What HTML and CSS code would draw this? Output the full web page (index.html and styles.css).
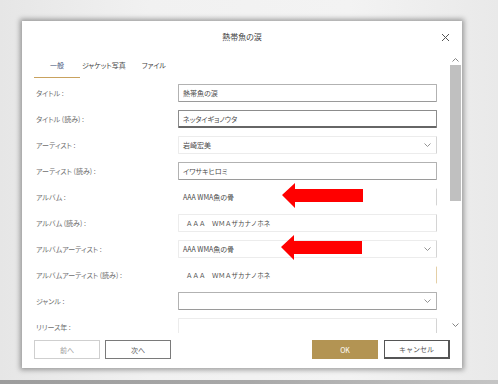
FILE: index.html
```html
<!DOCTYPE html>
<html lang="ja">
<head>
<meta charset="utf-8">
<title>熱帯魚の涙</title>
<link rel="stylesheet" href="styles.css">
</head>
<body>
<div class="backdrop">
  <div class="dialog">
    <header class="dlg-head">
      <span></span>
      <span class="dlg-title">熱帯魚の涙</span>
      <span class="close"><svg width="9" height="9" viewBox="0 0 9 9"><path d="M1 1L8 8M8 1L1 8" stroke="#555" stroke-width="1" fill="none"/></svg></span>
    </header>
    <div class="dlg-main">
      <div class="content">
        <nav class="tabs">
          <span class="tab active">一般</span>
          <span class="tab">ジャケット写真</span>
          <span class="tab tab-file">ファイル</span>
        </nav>
        <div class="form">
          <span class="label">タイトル :</span>
          <div class="field outlined">熱帯魚の涙</div>
          <span class="label">タイトル (読み) :</span>
          <div class="field focused">ネッタイギョノウタ</div>
          <span class="label">アーティスト :</span>
          <div class="field faint">岩崎宏美<svg class="chev" width="7" height="4" viewBox="0 0 7 4"><path d="M0.5 0.5L3.5 3.5L6.5 0.5" stroke="#888" stroke-width="0.9" fill="none"/></svg></div>
          <span class="label">アーティスト (読み) :</span>
          <div class="field outlined">イワサキヒロミ</div>
          <span class="label">アルバム :</span>
          <div class="field bare">AAA WMA魚の骨</div>
          <span class="label">アルバム (読み) :</span>
          <div class="field faint fw">ＡＡＡ　ＷＭＡザカナノホネ</div>
          <span class="label">アルバムアーティスト :</span>
          <div class="field faint">AAA WMA魚の骨<svg class="chev" width="7" height="4" viewBox="0 0 7 4"><path d="M0.5 0.5L3.5 3.5L6.5 0.5" stroke="#888" stroke-width="0.9" fill="none"/></svg></div>
          <span class="label">アルバムアーティスト (読み) :</span>
          <div class="field bare tan fw">ＡＡＡ　ＷＭＡザカナノホネ</div>
          <span class="label">ジャンル :</span>
          <div class="field outlined"><svg class="chev" width="7" height="4" viewBox="0 0 7 4"><path d="M0.5 0.5L3.5 3.5L6.5 0.5" stroke="#888" stroke-width="0.9" fill="none"/></svg></div>
          <span class="label">リリース年 :</span>
          <div class="field faint"></div>
        </div>
      </div>
      <div class="scrollbar">
        <span class="sb-btn"><svg width="7" height="4" viewBox="0 0 7 4"><path d="M0.5 3.5L3.5 0.5L6.5 3.5" stroke="#777" stroke-width="0.9" fill="none"/></svg></span>
        <span class="sb-thumb"></span>
        <span class="sb-track"></span>
        <span class="sb-btn"><svg width="7" height="4" viewBox="0 0 7 4"><path d="M0.5 0.5L3.5 3.5L6.5 0.5" stroke="#777" stroke-width="0.9" fill="none"/></svg></span>
      </div>
    </div>
    <footer class="dlg-foot">
      <button class="btn disabled">前へ</button>
      <button class="btn">次へ</button>
      <span class="foot-spacer"></span>
      <button class="btn primary">OK</button>
      <button class="btn dark">キャンセル</button>
    </footer>
  </div>
  <div class="bottom-strip"></div>
</div>
<svg class="arrow arrow-1" width="84" height="27" viewBox="0 0 84 27"><polygon points="1,13 14,1 14,7 82,7 82,20 14,20 14,26" fill="#ff0000"/></svg>
<svg class="arrow arrow-2" width="84" height="27" viewBox="0 0 84 27"><polygon points="1,13 14,1 14,7 82,7 82,20 14,20 14,26" fill="#ff0000"/></svg>
</body>
</html>
```

FILE: styles.css
```css
html, body {
  margin: 0;
  padding: 0;
}
body {
  width: 498px;
  height: 384px;
  overflow: hidden;
  position: relative;
  background: #eeeeee;
  font-family: "Noto Sans CJK JP", "Noto Sans", sans-serif;
  font-feature-settings: "palt";
  color: #333;
}
.backdrop {
  width: 498px;
  height: 384px;
  padding-top: 21px;
  box-sizing: border-box;
  background: linear-gradient(90deg, #e6e6e6 0%, #f1f1f1 30%, #f3f3f3 70%, #e9e9e9 100%);
}
.dialog {
  margin-left: 22px;
  width: 440px;
  height: 347px;
  background: #fff;
  box-shadow: 0 0 5px 2px rgba(0, 0, 0, 0.35);
  display: flex;
  flex-direction: column;
}
.dlg-head {
  height: 34px;
  flex: none;
  display: grid;
  grid-template-columns: 1fr auto 1fr;
  align-items: center;
  padding-bottom: 2px;
  box-sizing: border-box;
}
.dlg-title {
  font-size: 8px;
  color: #444;
  line-height: 10px;
}
.close {
  justify-self: end;
  margin-right: 12px;
  display: flex;
}
.dlg-main {
  height: 278px;
  flex: none;
  display: flex;
}
.content {
  flex: 1;
  display: flex;
  flex-direction: column;
  min-width: 0;
}
.tabs {
  height: 23px;
  flex: none;
  display: flex;
  padding-left: 12px;
  box-sizing: border-box;
}
.tab {
  font-size: 7px;
  line-height: 10px;
  color: #444;
  display: flex;
  align-items: center;
  justify-content: center;
  padding-bottom: 2px;
  border-bottom: 1px solid transparent;
  margin-left: 2px;
}
.tab.active {
  width: 46px;
  margin-left: 0;
  border-bottom-color: #c9a25e;
  color: #4a5a82;
}
.tab-file {
  margin-left: 16px;
}
.form {
  height: 255px;
  overflow: hidden;
  box-sizing: border-box;
  padding: 6px 13px 0 14px;
  display: grid;
  grid-template-columns: 142px 259px;
  grid-auto-rows: 18px;
  row-gap: 8px;
  align-items: center;
}
.label {
  font-size: 7px;
  line-height: 10px;
  color: #6e6e6e;
  white-space: nowrap;
}
.field {
  height: 18px;
  box-sizing: border-box;
  border: 1px solid #e8e8e8;
  border-right-color: #cfcfcf;
  border-radius: 1px;
  display: flex;
  align-items: center;
  padding-left: 4px;
  font-size: 7px;
  line-height: 10px;
  color: #4a4a4a;
  white-space: nowrap;
}
.field.outlined {
  border-color: #b2b2b2;
  border-bottom-color: #9a9a9a;
}
.field.focused {
  border-color: #8c8c8c;
  border-bottom: 2px solid #666;
}
.field.faint {
  border-color: #ececec;
  border-right-color: #d4d4d4;
}
.field.bare {
  border-color: #fff;
  border-right-color: #d4d4d4;
}
.field.tan {
  border-right-color: #e4cfa6;
}
.field.fw {
  font-feature-settings: normal;
  padding-left: 7px;
  font-size: 6.5px;
}
.chev {
  margin-left: auto;
  margin-right: 5px;
  flex: none;
}
.scrollbar {
  width: 12px;
  flex: none;
  display: flex;
  flex-direction: column;
  padding-right: 1px;
  padding-bottom: 3px;
  box-sizing: border-box;
}
.sb-btn {
  height: 10px;
  flex: none;
  display: flex;
  align-items: center;
  justify-content: center;
}
.sb-thumb {
  height: 136px;
  flex: none;
  background: #c0c0c0;
}
.sb-track {
  flex: 1;
}
.dlg-foot {
  height: 35px;
  flex: none;
  display: flex;
  align-items: flex-start;
  padding: 7px 12px 0 12px;
  box-sizing: border-box;
  gap: 5px;
}
.foot-spacer {
  flex: 1;
}
.btn {
  width: 66px;
  height: 19px;
  box-sizing: border-box;
  background: #fff;
  border: 1px solid #7a7a7a;
  font-family: inherit;
  font-size: 7px;
  color: #555;
  padding: 0;
  margin: 0;
}
.btn.disabled {
  border-color: #cfcfcf;
  color: #999;
}
.btn.primary {
  background: #b39453;
  border-color: #b39453;
  color: #fff;
  margin-right: 1px;
}
.btn.dark {
  border-color: #555;
  border-width: 1px 2px 2px 1px;
}
.bottom-strip {
  margin-top: 12px;
  height: 4px;
  background: linear-gradient(90deg, #9c9c9c 0%, #a8a8a8 50%, #c4c4c4 100%);
}
.arrow {
  position: absolute;
}
.arrow-1 {
  left: 281px;
  top: 182px;
}
.arrow-2 {
  left: 280px;
  top: 234px;
}
```
